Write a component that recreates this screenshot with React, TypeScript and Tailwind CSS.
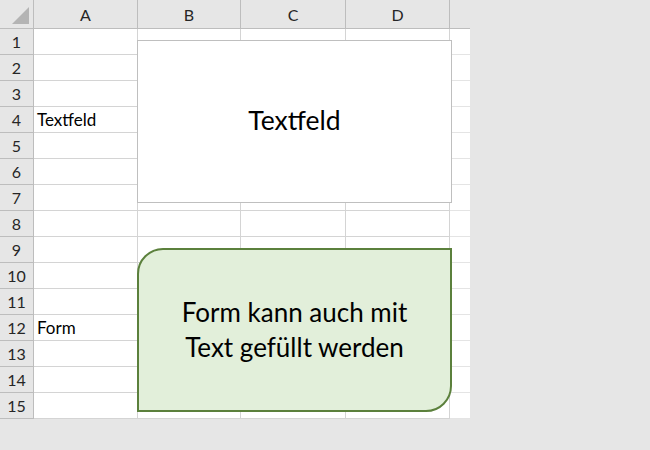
import React from "react";

const cols = ["A", "B", "C", "D"];
const rows = Array.from({ length: 15 }, (_, i) => i + 1);

const cellText: Record<number, string> = { 4: "Textfeld", 12: "Form" };

export default function App() {
  return (
    <div className="relative h-[450px] w-[650px] overflow-hidden bg-[#e6e6e6] font-['Lato','Liberation_Sans',sans-serif] text-black">
      <div className="grid w-[470px] grid-cols-[34px_104px_103px_105px_104px_20px] bg-white">
        {/* column header */}
        <div className="relative h-[29px] border-b border-r border-[#bdbdbd] bg-[#e6e6e6]">
          <svg className="absolute bottom-[4px] right-[4px]" width="17" height="17" viewBox="0 0 17 17">
            <polygon points="17,0 17,17 0,17" fill="#b4b4b4" />
          </svg>
        </div>
        {cols.map((c) => (
          <div
            key={c}
            className="flex h-[29px] items-center justify-center border-b border-r border-[#bdbdbd] bg-[#e6e6e6] pt-[2px] text-[16px] text-[#262626]"
          >
            {c}
          </div>
        ))}
        <div className="h-[29px] border-b border-[#bdbdbd] bg-[#e6e6e6]" />

        {rows.map((r) => (
          <React.Fragment key={r}>
            <div className="flex h-[26px] items-center justify-center border-b border-r border-[#bdbdbd] bg-[#e6e6e6] pt-[1px] text-[16px] text-[#262626]">
              {r}
            </div>
            <div className="flex h-[26px] items-center border-b border-r border-[#d4d4d4] pl-[3px] pt-[1px] text-[17px]">
              {cellText[r] ?? ""}
            </div>
            <div className="h-[26px] border-b border-r border-[#d4d4d4]" />
            <div className="h-[26px] border-b border-r border-[#d4d4d4]" />
            <div className="h-[26px] border-b border-r border-[#d4d4d4]" />
            <div className="h-[26px] border-b border-[#e4e4e4]" />
          </React.Fragment>
        ))}
      </div>

      {/* Textfeld shape */}
      <div className="absolute left-[137px] top-[40px] flex h-[163px] w-[315px] items-center justify-center border border-[#bfbfbf] bg-white pb-[1px] text-[26.5px]">
        Textfeld
      </div>

      {/* Form shape */}
      <div className="absolute left-[137px] top-[248px] flex h-[164px] w-[315px] items-center justify-center rounded-br-[26px] rounded-tl-[26px] border-2 border-[#5b803c] bg-[#e2efda] text-center text-[26px] leading-[35px]">
        <span>
          Form kann auch mit
          <br />
          Text gefüllt werden
        </span>
      </div>
    </div>
  );
}
